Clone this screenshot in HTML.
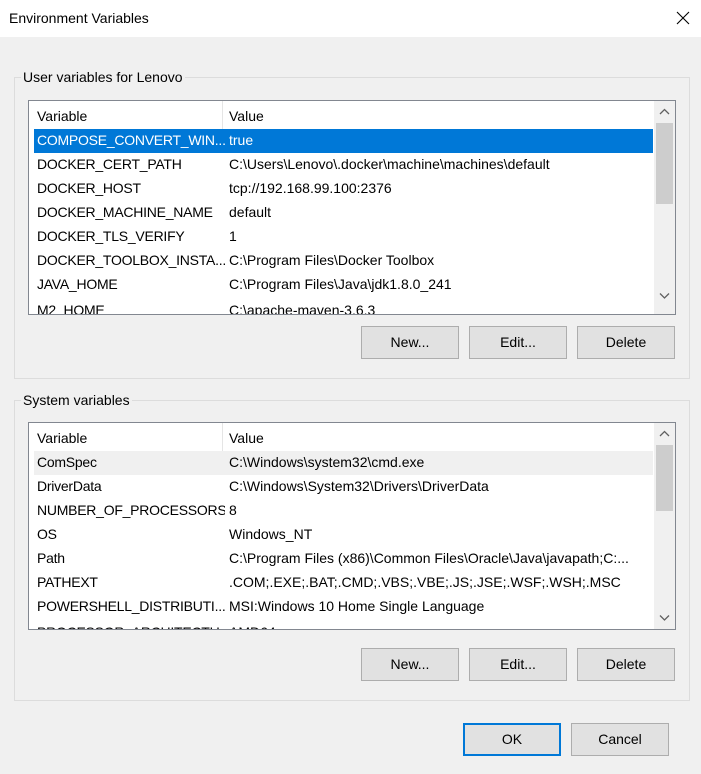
<!DOCTYPE html>
<html><head><meta charset="utf-8"><style>
*{margin:0;padding:0;box-sizing:border-box}
body{width:701px;height:774px;background:#f0f0f0;font-family:"Liberation Sans",sans-serif;font-size:14px;color:#000;position:relative;overflow:hidden}
.abs{position:absolute}
.title{left:0;top:0;width:701px;height:37px;background:#fff}
.title span{position:absolute;left:9px;top:10px;font-size:14px}
.grp{border:1px solid #dcdcdc}
.lbl{background:#f0f0f0;padding:0 2px;white-space:nowrap}
.list{border:1px solid #828790;background:#fff;overflow:hidden}
.row{position:absolute;left:5px;width:619px;height:24px;white-space:nowrap}
.row .v{position:absolute;left:3px;top:3px;width:188px;overflow:hidden;letter-spacing:-0.25px}
.row .w{position:absolute;left:195px;top:3px;width:420px;overflow:hidden}
.sel{background:#0078d7;color:#fff}
.hov{background:#f0f0f0}
.hdr{position:absolute;left:0;top:0;width:624px;height:28px}
.hdr .a{position:absolute;left:8px;top:7px}
.hdr .b{position:absolute;left:200px;top:7px}
.hdr .d{position:absolute;left:193px;top:0;width:1px;height:28px;background:#e5e5e5}
.sb{position:absolute;right:0;top:0;width:21px;height:100%;background:#f0f0f0}
.th{position:absolute;left:2px;width:17px;background:#cdcdcd}
.btn{position:absolute;height:33px;width:98px;background:#e1e1e1;border:1px solid #adadad;text-align:center;line-height:31px}
.ok{border:2px solid #0078d7;line-height:29px}
</style></head><body>
<div class="abs title"><span>Environment Variables</span>
<svg class="abs" style="left:676px;top:11px" width="14" height="14"><path d="M1 1L13 13M13 1L1 13" stroke="#000" stroke-width="1.1"/></svg></div>

<div class="abs grp" style="left:14px;top:77px;width:676px;height:302px"></div>
<div class="abs lbl" style="left:21px;top:69px">User variables for Lenovo</div>
<div class="abs list" style="left:28px;top:100px;width:648px;height:215px">
<div class="hdr"><span class="a">Variable</span><span class="d"></span><span class="b">Value</span></div>
<div class="row sel" style="top:28px"><span class="v">COMPOSE_CONVERT_WIN...</span><span class="w">true</span></div>
<div class="row" style="top:52px"><span class="v">DOCKER_CERT_PATH</span><span class="w">C:\Users\Lenovo\.docker\machine\machines\default</span></div>
<div class="row" style="top:76px"><span class="v">DOCKER_HOST</span><span class="w">tcp://192.168.99.100:2376</span></div>
<div class="row" style="top:100px"><span class="v">DOCKER_MACHINE_NAME</span><span class="w">default</span></div>
<div class="row" style="top:124px"><span class="v">DOCKER_TLS_VERIFY</span><span class="w">1</span></div>
<div class="row" style="top:148px"><span class="v">DOCKER_TOOLBOX_INSTA...</span><span class="w">C:\Program Files\Docker Toolbox</span></div>
<div class="row" style="top:172px"><span class="v">JAVA_HOME</span><span class="w">C:\Program Files\Java\jdk1.8.0_241</span></div>
<div class="row" style="top:198px"><span class="v">M2_HOME</span><span class="w">C:\apache-maven-3.6.3</span></div>
<div class="sb"><svg class="abs" style="left:5px;top:7px" width="11" height="8"><path d="M1 6L5.5 1.5L10 6" stroke="#606060" fill="none" stroke-width="1.3"/></svg>
<div class="th" style="top:22px;height:81px"></div>
<svg class="abs" style="left:5px;top:191px" width="11" height="8"><path d="M1 1.5L5.5 6L10 1.5" stroke="#606060" fill="none" stroke-width="1.3"/></svg></div>
</div>
<div class="btn" style="left:361px;top:326px">New...</div>
<div class="btn" style="left:469px;top:326px">Edit...</div>
<div class="btn" style="left:577px;top:326px">Delete</div>

<div class="abs grp" style="left:14px;top:400px;width:676px;height:301px"></div>
<div class="abs lbl" style="left:21px;top:392px">System variables</div>
<div class="abs list" style="left:28px;top:422px;width:648px;height:208px">
<div class="hdr"><span class="a">Variable</span><span class="d"></span><span class="b">Value</span></div>
<div class="row hov" style="top:28px"><span class="v">ComSpec</span><span class="w">C:\Windows\system32\cmd.exe</span></div>
<div class="row" style="top:52px"><span class="v">DriverData</span><span class="w">C:\Windows\System32\Drivers\DriverData</span></div>
<div class="row" style="top:76px"><span class="v">NUMBER_OF_PROCESSORS</span><span class="w">8</span></div>
<div class="row" style="top:100px"><span class="v">OS</span><span class="w">Windows_NT</span></div>
<div class="row" style="top:124px"><span class="v">Path</span><span class="w">C:\Program Files (x86)\Common Files\Oracle\Java\javapath;C:...</span></div>
<div class="row" style="top:148px"><span class="v">PATHEXT</span><span class="w">.COM;.EXE;.BAT;.CMD;.VBS;.VBE;.JS;.JSE;.WSF;.WSH;.MSC</span></div>
<div class="row" style="top:172px"><span class="v">POWERSHELL_DISTRIBUTI...</span><span class="w">MSI:Windows 10 Home Single Language</span></div>
<div class="row" style="top:198px"><span class="v">PROCESSOR_ARCHITECTU...</span><span class="w">AMD64</span></div>
<div class="sb"><svg class="abs" style="left:5px;top:7px" width="11" height="8"><path d="M1 6L5.5 1.5L10 6" stroke="#606060" fill="none" stroke-width="1.3"/></svg>
<div class="th" style="top:22px;height:66px"></div>
<svg class="abs" style="left:5px;top:191px" width="11" height="8"><path d="M1 1.5L5.5 6L10 1.5" stroke="#606060" fill="none" stroke-width="1.3"/></svg></div>
</div>
<div class="btn" style="left:361px;top:648px">New...</div>
<div class="btn" style="left:469px;top:648px">Edit...</div>
<div class="btn" style="left:577px;top:648px">Delete</div>

<div class="btn ok" style="left:463px;top:723px">OK</div>
<div class="btn" style="left:571px;top:723px">Cancel</div>
</body></html>
